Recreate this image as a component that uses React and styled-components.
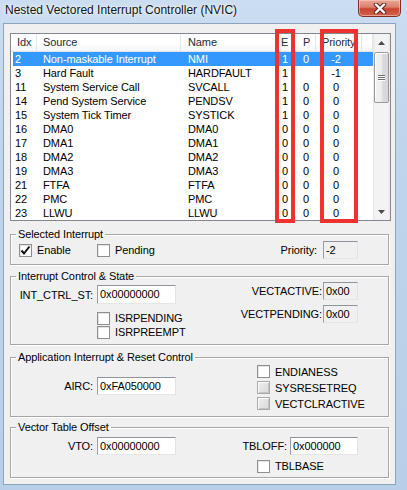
import React from 'react';
import styled, { createGlobalStyle } from 'styled-components';

const FONT = '"Liberation Sans", Arial, sans-serif';

const rows = [
  { idx: 2, source: 'Non-maskable Interrupt', name: 'NMI', e: '1', p: '0', prio: '-2', selected: true },
  { idx: 3, source: 'Hard Fault', name: 'HARDFAULT', e: '1', p: '', prio: '-1' },
  { idx: 11, source: 'System Service Call', name: 'SVCALL', e: '1', p: '0', prio: '0' },
  { idx: 14, source: 'Pend System Service', name: 'PENDSV', e: '1', p: '0', prio: '0' },
  { idx: 15, source: 'System Tick Timer', name: 'SYSTICK', e: '1', p: '0', prio: '0' },
  { idx: 16, source: 'DMA0', name: 'DMA0', e: '0', p: '0', prio: '0' },
  { idx: 17, source: 'DMA1', name: 'DMA1', e: '0', p: '0', prio: '0' },
  { idx: 18, source: 'DMA2', name: 'DMA2', e: '0', p: '0', prio: '0' },
  { idx: 19, source: 'DMA3', name: 'DMA3', e: '0', p: '0', prio: '0' },
  { idx: 21, source: 'FTFA', name: 'FTFA', e: '0', p: '0', prio: '0' },
  { idx: 22, source: 'PMC', name: 'PMC', e: '0', p: '0', prio: '0' },
  { idx: 23, source: 'LLWU', name: 'LLWU', e: '0', p: '0', prio: '0' },
];

const Check = ({ label, checked, grayed }) => (
  <CheckLabel>
    <Box $grayed={grayed}>
      {checked && (
        <svg width="11" height="11" viewBox="0 0 11 11">
          <path d="M1.5 5.5 L4 8.5 L9.5 1.5" fill="none" stroke="#111" strokeWidth="2" />
        </svg>
      )}
    </Box>
    <span>{label}</span>
  </CheckLabel>
);

const App = () => {
  return (
    <>
      <GlobalStyle />
      <Window>
        <TitleBar>
          <Title>Nested Vectored Interrupt Controller (NVIC)</Title>
          <CloseButton>
            <svg width="14" height="11" viewBox="0 0 14 11">
              <path
                d="M3 1.5 L11 9.5 M11 1.5 L3 9.5"
                stroke="#5a2a22"
                strokeWidth="4.4"
                strokeLinecap="round"
              />
              <path
                d="M3 1.5 L11 9.5 M11 1.5 L3 9.5"
                stroke="#fff"
                strokeWidth="2.4"
                strokeLinecap="round"
              />
            </svg>
          </CloseButton>
        </TitleBar>

        <Body>
          <ListBox>
            <Table>
              <HeaderRow>
                <HeaderCell $pad={6}>Idx</HeaderCell>
                <HeaderCell $pad={6}>Source</HeaderCell>
                <HeaderCell $pad={7}>Name</HeaderCell>
                <HeaderCell $pad={4}>E</HeaderCell>
                <HeaderCell $pad={8}>P</HeaderCell>
                <HeaderCell $pad={6}>Priority</HeaderCell>
                <HeaderCell />
              </HeaderRow>
              {rows.map((r) => (
                <Row key={r.idx} $selected={r.selected}>
                  <Cell $pad={2}>{r.idx}</Cell>
                  <Cell $pad={6}>{r.source}</Cell>
                  <Cell $pad={7}>{r.name}</Cell>
                  <Cell $pad={5}>{r.e}</Cell>
                  <Cell $pad={8}>{r.p}</Cell>
                  <Cell $center>{r.prio}</Cell>
                </Row>
              ))}
            </Table>
            <ScrollBar>
              <ScrollArrow>
                <svg width="7" height="4" viewBox="0 0 7 4">
                  <polygon points="0,4 7,4 3.5,0" fill="#4a4a4a" />
                </svg>
              </ScrollArrow>
              <ScrollTrack>
                <Thumb>
                  <Grip />
                  <Grip />
                  <Grip />
                </Thumb>
              </ScrollTrack>
              <ScrollArrow>
                <svg width="7" height="4" viewBox="0 0 7 4">
                  <polygon points="0,0 7,0 3.5,4" fill="#4a4a4a" />
                </svg>
              </ScrollArrow>
            </ScrollBar>
          </ListBox>

          <GroupBox $mt={7} $h={37}>
            <Legend>Selected Interrupt</Legend>
            <SelectedRow>
              <CheckSlot>
                <Check label="Enable" checked />
              </CheckSlot>
              <Check label="Pending" />
              <FieldRow $gap={6} $push>
                <FieldLabel>Priority:</FieldLabel>
                <TextField $w={35} $h={18} $readonly>-2</TextField>
              </FieldRow>
            </SelectedRow>
          </GroupBox>

          <GroupBox $mt={5} $h={75}>
            <Legend>Interrupt Control &amp; State</Legend>
            <Split>
              <Column $mt={2}>
                <FieldRow $gap={4}>
                  <FieldLabel $w={82}>INT_CTRL_ST:</FieldLabel>
                  <TextField $w={79} $h={19}>0x00000000</TextField>
                </FieldRow>
                <CheckList $indent={86} $mt={7} $row={14} $gap={0}>
                  <Check label="ISRPENDING" />
                  <Check label="ISRPREEMPT" />
                </CheckList>
              </Column>
              <RightColumn $mt={-1} $gap={5}>
                <FieldRow $gap={1}>
                  <FieldLabel>VECTACTIVE:</FieldLabel>
                  <TextField $w={35} $h={18} $readonly>0x00</TextField>
                </FieldRow>
                <FieldRow $gap={1}>
                  <FieldLabel>VECTPENDING:</FieldLabel>
                  <TextField $w={35} $h={18} $readonly>0x00</TextField>
                </FieldRow>
              </RightColumn>
            </Split>
          </GroupBox>

          <GroupBox $mt={6} $h={66}>
            <Legend>Application Interrupt &amp; Reset Control</Legend>
            <Split>
              <Column $mt={13}>
                <FieldRow $gap={4}>
                  <FieldLabel $w={82}>AIRC:</FieldLabel>
                  <TextField $w={79} $h={18}>0xFA050000</TextField>
                </FieldRow>
              </Column>
              <Column>
                <CheckList $indent={17} $row={15} $gap={1}>
                  <Check label="ENDIANESS" />
                  <Check label="SYSRESETREQ" grayed />
                  <Check label="VECTCLRACTIVE" grayed />
                </CheckList>
              </Column>
            </Split>
          </GroupBox>

          <GroupBox $mt={4} $h={57}>
            <Legend>Vector Table Offset</Legend>
            <Split>
              <Column $mt={3}>
                <FieldRow $gap={4}>
                  <FieldLabel $w={82}>VTO:</FieldLabel>
                  <TextField $w={79} $h={18}>0x00000000</TextField>
                </FieldRow>
              </Column>
              <Column $mt={3}>
                <RightColumn $gap={0}>
                  <FieldRow $gap={3}>
                    <FieldLabel>TBLOFF:</FieldLabel>
                    <TextField $w={68} $h={18}>0x000000</TextField>
                  </FieldRow>
                </RightColumn>
                <CheckList $indent={17} $mt={4} $row={14} $gap={0}>
                  <Check label="TBLBASE" />
                </CheckList>
              </Column>
            </Split>
          </GroupBox>

          <Marker $left={271} $w={20} />
          <Marker $left={316} $w={38} />
        </Body>
      </Window>
    </>
  );
};

const GlobalStyle = createGlobalStyle`
  *, *::before, *::after {
    box-sizing: border-box;
  }
  html, body {
    margin: 0;
    padding: 0;
    background: #bad1ea;
  }
  body {
    font-family: ${FONT};
    font-size: 11px;
    letter-spacing: -0.1px;
    color: #000;
  }
`;

const Window = styled.div`
  width: 407px;
  height: 490px;
  display: flex;
  flex-direction: column;
  background: linear-gradient(180deg, #cbddf1 0%, #bfd5ec 30%, #b8cfe9 100%);
  overflow: hidden;
`;

const TitleBar = styled.div`
  height: 23px;
  flex: none;
  display: flex;
  justify-content: space-between;
  align-items: flex-start;
  padding-left: 5px;
  padding-right: 6px;
`;

const Title = styled.span`
  font-family: ${FONT};
  font-size: 12px;
  letter-spacing: 0;
  line-height: 20px;
  color: #111;
  text-shadow: 0 0 6px rgba(255, 255, 255, 0.95), 0 0 2px #fff;
`;

const CloseButton = styled.div`
  width: 43px;
  height: 17px;
  display: flex;
  align-items: center;
  justify-content: center;
  border: 1px solid #7e3026;
  border-top: none;
  border-radius: 0 0 5px 5px;
  background: linear-gradient(180deg, #e9a898 0%, #dc7e6a 45%, #c9442f 55%, #d4634c 100%);
  box-shadow: inset 0 0 0 1px rgba(255, 210, 200, 0.55);
`;

const Body = styled.div`
  position: relative;
  flex: 1;
  margin: 0 11px 5px 3px;
  padding: 9px 0 0 6px;
  background: #f0f0f0;
  border: 1px solid #8ea3bc;
  display: flex;
  flex-direction: column;
`;

const ListBox = styled.div`
  width: 381px;
  height: 188px;
  flex: none;
  display: flex;
  border: 1px solid #828790;
  background: #fff;
`;

const Table = styled.div`
  flex: 1;
  display: flex;
  flex-direction: column;
`;

const HeaderRow = styled.div`
  height: 18px;
  display: grid;
  grid-template-columns: 26px 144px 96px 18px 21px 46px 1fr;
  background: linear-gradient(180deg, #ffffff 0%, #ffffff 55%, #f4f5f7 100%);
  border-bottom: 1px solid #e2e4e8;
`;

const HeaderCell = styled.div`
  padding-left: ${(p) => p.$pad || 0}px;
  line-height: 17px;
  color: #1e2a3a;
  white-space: nowrap;
  border-right: 1px solid #e3e6ea;
`;

const Row = styled.div`
  height: 14px;
  margin-left: 2px;
  display: grid;
  grid-template-columns: 24px 144px 96px 18px 21px 40px 1fr;
  background: ${(p) => (p.$selected ? '#3399ff' : 'transparent')};
  color: ${(p) => (p.$selected ? '#fff' : '#000')};
`;

const Cell = styled.div`
  padding-left: ${(p) => p.$pad || 0}px;
  text-align: ${(p) => (p.$center ? 'center' : 'left')};
  line-height: 14px;
  white-space: nowrap;
`;

const ScrollBar = styled.div`
  width: 17px;
  display: flex;
  flex-direction: column;
  background: linear-gradient(90deg, #e6e6e6 0%, #f3f3f3 15%, #f3f3f3 85%, #e9e9e9 100%);
`;

const ScrollArrow = styled.div`
  height: 17px;
  display: flex;
  align-items: center;
  justify-content: center;
`;

const ScrollTrack = styled.div`
  flex: 1;
  padding: 1px 1px 0 1px;
`;

const Thumb = styled.div`
  height: 51px;
  border: 1px solid #9a9a9a;
  border-radius: 2px;
  background: linear-gradient(90deg, #f3f3f3 0%, #ececec 50%, #dcdcdc 51%, #d6d6d6 100%);
  box-shadow: inset 1px 1px 0 #fff;
  display: flex;
  flex-direction: column;
  align-items: center;
  justify-content: center;
  gap: 1px;
`;

const Grip = styled.div`
  width: 7px;
  height: 1px;
  background: #6c6c6c;
  box-shadow: 0 1px 0 #fff;
`;

const GroupBox = styled.fieldset`
  margin: ${(p) => p.$mt}px 0 0 0;
  padding: 0;
  width: 379px;
  height: ${(p) => p.$h}px;
  min-width: 0;
  flex: none;
  border: 1px solid #a7a7a7;
  box-shadow: inset 1px 1px 0 #fff, 1px 1px 0 #fff;
`;

const Legend = styled.legend`
  margin-left: 5px;
  padding: 0 2px;
  line-height: 13px;
  font-size: 11px;
  color: #000;
`;

const SelectedRow = styled.div`
  height: 18px;
  display: flex;
  align-items: center;
  padding-left: 8px;
  padding-right: 30px;
`;

const CheckSlot = styled.div`
  width: 78px;
`;

const Split = styled.div`
  display: grid;
  grid-template-columns: 229px 1fr;
`;

const Column = styled.div`
  margin-top: ${(p) => p.$mt || 0}px;
  display: flex;
  flex-direction: column;
`;

const RightColumn = styled.div`
  margin-top: ${(p) => p.$mt || 0}px;
  display: flex;
  flex-direction: column;
  align-items: flex-end;
  gap: ${(p) => p.$gap}px;
  padding-right: 30px;
`;

const FieldRow = styled.div`
  display: flex;
  align-items: center;
  gap: ${(p) => p.$gap}px;
  margin-left: ${(p) => (p.$push ? 'auto' : '0')};
`;

const FieldLabel = styled.span`
  width: ${(p) => (p.$w ? `${p.$w}px` : 'auto')};
  text-align: right;
  white-space: nowrap;
`;

const TextField = styled.div`
  width: ${(p) => p.$w}px;
  height: ${(p) => p.$h}px;
  line-height: ${(p) => p.$h - 2}px;
  padding-left: 2px;
  white-space: nowrap;
  overflow: hidden;
  background: ${(p) => (p.$readonly ? '#f0f0f0' : '#fff')};
  border: 1px solid;
  border-color: #8f939b #dfe2e7 #e3e6ea #9a9ea6;
`;

const CheckList = styled.div`
  margin-top: ${(p) => p.$mt || 0}px;
  padding-left: ${(p) => p.$indent}px;
  display: flex;
  flex-direction: column;
  gap: ${(p) => p.$gap}px;

  & > label {
    height: ${(p) => p.$row}px;
  }
`;

const CheckLabel = styled.label`
  display: flex;
  align-items: center;
  gap: 5px;
  white-space: nowrap;
`;

const Box = styled.span`
  width: 13px;
  height: 13px;
  flex: none;
  display: flex;
  align-items: center;
  justify-content: center;
  border: 1px solid ${(p) => (p.$grayed ? '#a9a9a9' : '#8e8f8f')};
  background: ${(p) =>
    p.$grayed ? 'linear-gradient(135deg, #eeeeee, #d9d9d9)' : '#ffffff'};
  box-shadow: ${(p) =>
    p.$grayed
      ? 'inset 1px 1px 0 #fbfbfb, inset -1px -1px 0 #c4c4c4'
      : 'inset 1px 1px 0 #e4e4e4'};
`;

const Marker = styled.div`
  position: absolute;
  top: 5px;
  left: ${(p) => p.$left}px;
  width: ${(p) => p.$w}px;
  height: 194px;
  border: 4px solid #ee3232;
  pointer-events: none;
`;

export default App;
